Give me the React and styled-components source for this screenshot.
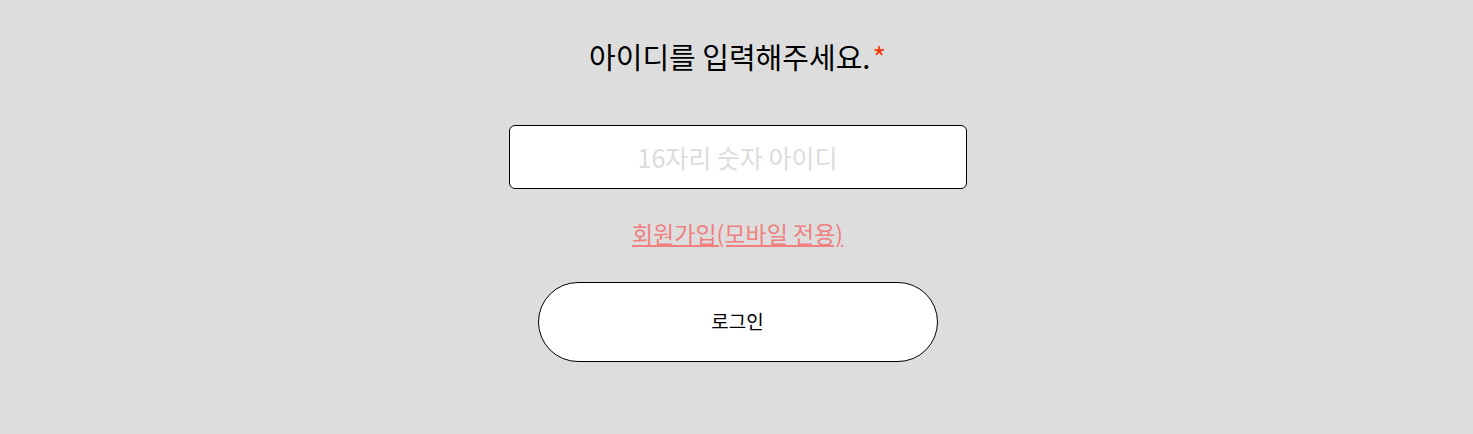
import React from "react";
import styled, { createGlobalStyle } from "styled-components";

const Global = createGlobalStyle`
  html, body { margin: 0; padding: 0; background: #dddddd; }
  body { font-family: "Noto Sans CJK KR", "Noto Sans", sans-serif; }
  * { box-sizing: border-box; }
`;

const Page = styled.main`
  display: flex;
  flex-direction: column;
  align-items: center;
  padding: 36px 0 0 2px;
  min-height: 434px;
`;

const Title = styled.h1`
  margin: 0;
  font-size: 29px;
  font-weight: 400;
  line-height: 40px;
  color: #000;
`;

const Star = styled.span`
  color: #f03c0a;
  margin-left: 2px;
`;

const Input = styled.input`
  margin-top: 49px;
  width: 458px;
  height: 64px;
  border: 1px solid #000;
  border-radius: 6px;
  background: #fff;
  text-align: center;
  font-family: inherit;
  font-size: 25px;
  outline: none;
  &::placeholder { color: #dcdcdc; }
`;

const Link = styled.a`
  margin-top: 28px;
  font-size: 23px;
  line-height: 32px;
  color: #f08080;
  text-decoration: underline;
  cursor: pointer;
`;

const Button = styled.button`
  margin-top: 33px;
  width: 400px;
  height: 80px;
  border: 1px solid #000;
  border-radius: 40px;
  background: #fff;
  font-family: inherit;
  font-size: 19px;
  line-height: 1;
  padding: 0 0 3px;
  color: #000;
  cursor: pointer;
`;

export default function App() {
  return (
    <>
      <Global />
      <Page>
        <Title>
          아이디를 입력해주세요.<Star>*</Star>
        </Title>
        <Input placeholder="16자리 숫자 아이디" />
        <Link>회원가입(모바일 전용)</Link>
        <Button>로그인</Button>
      </Page>
    </>
  );
}
